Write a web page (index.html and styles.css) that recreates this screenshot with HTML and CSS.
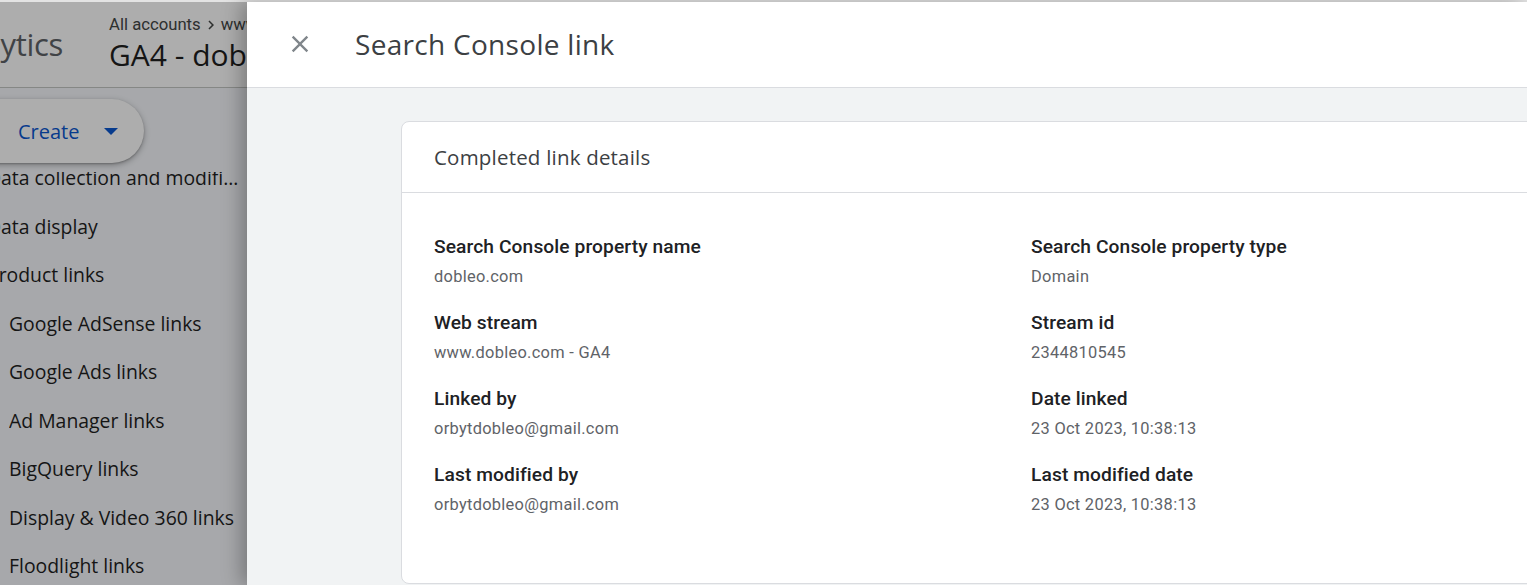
FILE: index.html
```html
<!DOCTYPE html>
<html lang="en">
<head>
<meta charset="utf-8">
<title>Search Console link</title>
<link rel="stylesheet" href="styles.css">
</head>
<body>
<div class="chrome-line"></div>
<div class="stage">
  <aside class="app">
    <header class="app-header">
      <div class="brand">Analytics</div>
      <div class="divider"></div>
      <div class="property">
        <div class="crumbs">All accounts <svg class="chev" viewBox="0 0 24 24" width="18" height="18"><path d="M8.6 16.6 13.2 12 8.6 7.4 10 6l6 6-6 6z" fill="currentColor"/></svg> www.dobleo.com - GA4</div>
        <div class="prop-name">GA4 - dobleo.com</div>
      </div>
    </header>
    <div class="create-wrap">
      <button class="create">Create <svg class="caret" viewBox="0 0 14 7" width="14" height="7"><path d="M0 0h14L7 7z" fill="currentColor"/></svg></button>
    </div>
    <nav class="nav">
      <div class="nav-item top first">Data collection and modification</div>
      <div class="nav-item top">Data display</div>
      <div class="nav-item top">Product links</div>
      <div class="nav-item sub">Google AdSense links</div>
      <div class="nav-item sub">Google Ads links</div>
      <div class="nav-item sub">Ad Manager links</div>
      <div class="nav-item sub">BigQuery links</div>
      <div class="nav-item sub">Display &amp; Video 360 links</div>
      <div class="nav-item sub">Floodlight links</div>
    </nav>
    <div class="scrim"></div>
  </aside>
  <main class="panel">
    <div class="panel-header">
      <button class="close" aria-label="Close">
        <svg viewBox="0 0 24 24" width="28" height="28"><path d="M19 6.41 17.59 5 12 10.59 6.41 5 5 6.41 10.59 12 5 17.59 6.41 19 12 13.41 17.59 19 19 17.59 13.41 12z" fill="currentColor"/></svg>
      </button>
      <h1 class="panel-title">Search Console link</h1>
    </div>
    <div class="panel-body">
      <section class="card">
        <div class="card-header">Completed link details</div>
        <div class="card-body">
          <div class="field"><div class="label">Search Console property name</div><div class="value">dobleo.com</div></div>
          <div class="field"><div class="label">Search Console property type</div><div class="value">Domain</div></div>
          <div class="field"><div class="label">Web stream</div><div class="value">www.dobleo.com - GA4</div></div>
          <div class="field"><div class="label">Stream id</div><div class="value">2344810545</div></div>
          <div class="field"><div class="label">Linked by</div><div class="value">orbytdobleo@gmail.com</div></div>
          <div class="field"><div class="label">Date linked</div><div class="value">23 Oct 2023, 10:38:13</div></div>
          <div class="field"><div class="label">Last modified by</div><div class="value">orbytdobleo@gmail.com</div></div>
          <div class="field"><div class="label">Last modified date</div><div class="value">23 Oct 2023, 10:38:13</div></div>
        </div>
      </section>
    </div>
  </main>
</div>
</body>
</html>
```

FILE: styles.css
```css
* { box-sizing: border-box; }
html, body {
  margin: 0;
  padding: 0;
  width: 1527px;
  height: 585px;
  overflow: hidden;
  font-family: Roboto, "Liberation Sans", sans-serif;
  background: #f1f3f4;
}
.chrome-line {
  height: 2px;
  background: #e3e3e3;
}
.stage {
  display: flex;
  height: 583px;
}

/* ---------- dimmed app behind ---------- */
.app {
  position: relative;
  width: 247px;
  flex: 0 0 247px;
  overflow: hidden;
  background: #f6f8fc;
}
.app-header {
  height: 86px;
  background: #ffffff;
  border-bottom: 1px solid #c4c7c5;
  display: flex;
  align-items: center;
  white-space: nowrap;
}
.brand {
  font-family: "Open Sans", sans-serif;
  font-size: 31px;
  color: #5f6368;
  margin-left: -62px;
  letter-spacing: -0.3px;
  margin-top: -2px;
}
.divider {
  width: 1px;
  height: 42px;
  background: #c4c7c5;
  margin-left: 22px;
  margin-right: 24px;
}
.property {
  display: flex;
  flex-direction: column;
}
.crumbs {
  font-size: 16.7px;
  line-height: 20px;
  color: #444746;
  display: flex;
  align-items: center;
  gap: 1px;
}
.chev { color: #444746; }
.prop-name {
  font-family: "Open Sans", sans-serif;
  font-size: 30px;
  color: #1f1f1f;
  line-height: 40px;
}
.create-wrap {
  height: 84px;
  padding-top: 11px;
}
.create {
  display: flex;
  align-items: center;
  height: 64px;
  width: 184px;
  margin-left: -40px;
  padding-left: 58px;
  border: none;
  border-radius: 32px;
  background: #ffffff;
  color: #0b57d0;
  font-family: "Open Sans", sans-serif;
  font-size: 20px;
  box-shadow: 0 2px 6px rgba(0,0,0,0.3), 0 1px 2px rgba(0,0,0,0.2);
}
.caret { margin-left: 25px; }
.nav {
  overflow: hidden;
  height: 413px;
}
.nav-item {
  height: 48.5px;
  line-height: 48.5px;
  font-family: "Open Sans", sans-serif;
  font-size: 19.4px;
  color: #1f1f1f;
  white-space: nowrap;
  overflow: hidden;
  text-overflow: ellipsis;
}
.nav-item.top { margin-left: -13px; }
.nav-item.first { margin-top: -18px; }
.nav-item.sub { margin-left: 9px; }
.scrim {
  position: absolute;
  inset: 0;
  background: rgba(0,0,0,0.32);
}

/* ---------- side panel ---------- */
.panel {
  flex: 1;
  min-width: 0;
  display: flex;
  flex-direction: column;
  background: #f1f3f4;
  box-shadow: -6px 0 18px rgba(0,0,0,0.28);
  position: relative;
  z-index: 1;
  overflow: hidden;
}
.panel-header {
  height: 86px;
  flex: 0 0 86px;
  background: #ffffff;
  border-bottom: 1px solid #dadce0;
  display: flex;
  align-items: center;
}
.close {
  width: 28px;
  height: 28px;
  padding: 0;
  margin-left: 39px;
  margin-top: -2px;
  border: none;
  background: none;
  color: #80868b;
  display: flex;
}
.panel-title {
  margin: 0 0 0 41px;
  font-family: "Open Sans", sans-serif;
  font-weight: 400;
  font-size: 28px;
  letter-spacing: 0.3px;
  color: #3c4043;
  line-height: 36px;
  margin-top: -2px;
}
.panel-body {
  padding: 33px 0 0 154px;
  flex: 1;
}
.card {
  width: 1250px;
  height: 463px;
  background: #ffffff;
  border: 1px solid #dadce0;
  border-radius: 8px;
}
.card-header {
  height: 71px;
  border-bottom: 1px solid #dadce0;
  display: flex;
  align-items: center;
  padding-left: 32px;
  font-family: "Open Sans", sans-serif;
  font-size: 20.5px;
  letter-spacing: 0.2px;
  color: #3c4043;
}
.card-body {
  display: grid;
  grid-template-columns: 597px 597px;
  row-gap: 24px;
  padding: 42px 0 0 32px;
}
.label {
  font-size: 19.2px;
  font-weight: 500;
  line-height: 24px;
  color: #202124;
  letter-spacing: 0.1px;
}
.value {
  margin-top: 8px;
  font-size: 16.4px;
  line-height: 20px;
  color: #5f6368;
  letter-spacing: 0.3px;
}
```
